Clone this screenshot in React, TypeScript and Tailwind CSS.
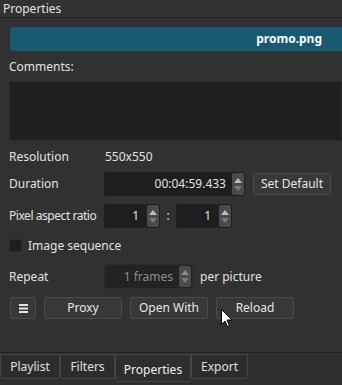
import React from "react";

function Spin({ dim }: { dim?: boolean }) {
  // little up/down column inside the spin boxes
  return (
    <div className="flex flex-col w-[12px] h-full bg-[#4a4a4a] rounded-[2px] items-center justify-center gap-[3px] shrink-0">
      <svg width="8" height="5" viewBox="0 0 8 5">
        <path d="M0 5 L4 0 L8 5 Z" fill={dim ? "#8a8a8a" : "#bdbdbd"} />
      </svg>
      <svg width="8" height="5" viewBox="0 0 8 5">
        <path d="M0 0 L4 5 L8 0 Z" fill="#7a7a7a" />
      </svg>
    </div>
  );
}

function Btn({ children, w }: { children: React.ReactNode; w: string }) {
  return (
    <div className={`${w} h-[22px] shrink-0 flex items-center justify-center rounded-[3px] border border-[#4c4c4c] bg-[#383838] text-[#e6e6e6] whitespace-nowrap`}>
      {children}
    </div>
  );
}

function Tab({ label, w, active }: { label: string; w: string; active?: boolean }) {
  return (
    <div
      className={`${w} flex items-center justify-center border border-[#454545] rounded-b-[3px] ${
        active ? "h-[28px] bg-[#2e2e2e] pt-[3px] text-[#f0f0f0]" : "h-[25px] bg-[#2c2c2c] text-[#e0e0e0]"
      }`}
    >
      {label}
    </div>
  );
}

export default function App() {
  return (
    <div
      className="relative w-[342px] h-[385px] bg-[#313131] text-[#e2e2e2] text-[12px] leading-none flex flex-col overflow-hidden whitespace-nowrap"
      style={{ fontFamily: '"Noto Sans", "Liberation Sans", sans-serif' }}
    >
      {/* title */}
      <div className="h-[18px] flex items-center px-[3px] border-b border-[#242424] bg-[#323232]">Properties</div>

      <div className="flex flex-col pl-[9px]">
        <div className="mt-[9px] ml-[1px] h-[24px] bg-[#185a72] rounded-l-[3px] flex items-center justify-end pr-[20px] font-bold text-white">
          promo.png
        </div>

        <div className="mt-[10px] h-[12px] flex items-center">Comments:</div>

        <div className="mt-[8px] h-[60px] bg-[#1f1f1f] border border-[#2a2a2a]" />

        {/* resolution */}
        <div className="mt-[9px] h-[14px] flex items-center">
          <span className="w-[96px] shrink-0">Resolution</span>
          <span>550x550</span>
        </div>

        {/* duration */}
        <div className="mt-[8px] h-[24px] flex items-center">
          <span className="w-[95px] shrink-0">Duration</span>
          <div className="w-[141px] shrink-0 h-[24px] bg-[#1e1e1e] rounded-[3px] flex items-center justify-end gap-[6px] pr-[1px] py-[1px]">
            <span>00:04:59.433</span>
            <Spin />
          </div>
          <div className="ml-[8px]">
            <Btn w="w-[78px]">Set Default</Btn>
          </div>
        </div>

        {/* pixel aspect ratio */}
        <div className="mt-[8px] h-[24px] flex items-center">
          <span className="w-[95px] shrink-0 tracking-[-0.45px]">Pixel aspect ratio</span>
          <div className="w-[56px] shrink-0 h-[24px] bg-[#1e1e1e] rounded-[3px] flex items-center justify-end gap-[8px] pr-[1px] py-[1px]">
            <span>1</span>
            <Spin />
          </div>
          <span className="w-[16px] shrink-0 text-center">:</span>
          <div className="w-[56px] shrink-0 h-[24px] bg-[#1e1e1e] rounded-[3px] flex items-center justify-end gap-[8px] pr-[1px] py-[1px]">
            <span>1</span>
            <Spin />
          </div>
        </div>

        {/* image sequence */}
        <div className="mt-[10px] h-[15px] flex items-center gap-[6px]">
          <div className="w-[13px] h-[13px] bg-[#1e1e1e] border border-[#2a2a2a] rounded-[1px]" />
          <span>Image sequence</span>
        </div>

        {/* repeat */}
        <div className="mt-[11px] h-[25px] flex items-center">
          <span className="w-[95px] shrink-0">Repeat</span>
          <div className="w-[89px] shrink-0 h-[25px] bg-[#232323] rounded-[3px] flex items-center justify-end gap-[6px] pr-[1px] py-[1px] border border-[#2b2b2b]">
            <span className="text-[#8c8c8c]">1 frames</span>
            <Spin dim />
          </div>
          <span className="ml-[7px]">per picture</span>
        </div>

        {/* buttons */}
        <div className="mt-[8px] flex items-center gap-[8px] ml-[1px]">
          <Btn w="w-[26px]">
            <svg width="9" height="9" viewBox="0 0 9 9">
              <rect x="0" y="0" width="9" height="2" fill="#e6e6e6" />
              <rect x="0" y="3.5" width="9" height="2" fill="#e6e6e6" />
              <rect x="0" y="7" width="9" height="2" fill="#e6e6e6" />
            </svg>
          </Btn>
          <Btn w="w-[78px]">Proxy</Btn>
          <Btn w="w-[78px]">Open With</Btn>
          <Btn w="w-[78px]">Reload</Btn>
        </div>
      </div>

      <div className="flex-1" />

      {/* tabs */}
      <div className="h-[33px] border-t border-[#232323] bg-[#2f2f2f] flex items-start pt-[1px]">
        <Tab label="Playlist" w="w-[60px]" />
        <Tab label="Filters" w="w-[55px]" />
        <Tab label="Properties" w="w-[76px]" active />
        <Tab label="Export" w="w-[57px]" />
      </div>

      {/* mouse pointer */}
      <svg className="absolute left-[221px] top-[309px]" width="12" height="19" viewBox="0 0 12 19">
        <path d="M0.5 0.5 L0.5 15.5 L4 12 L6.5 17.5 L8.5 16.5 L6 11 L11 11 Z" fill="#ffffff" stroke="#000000" strokeWidth="1" />
      </svg>
    </div>
  );
}
